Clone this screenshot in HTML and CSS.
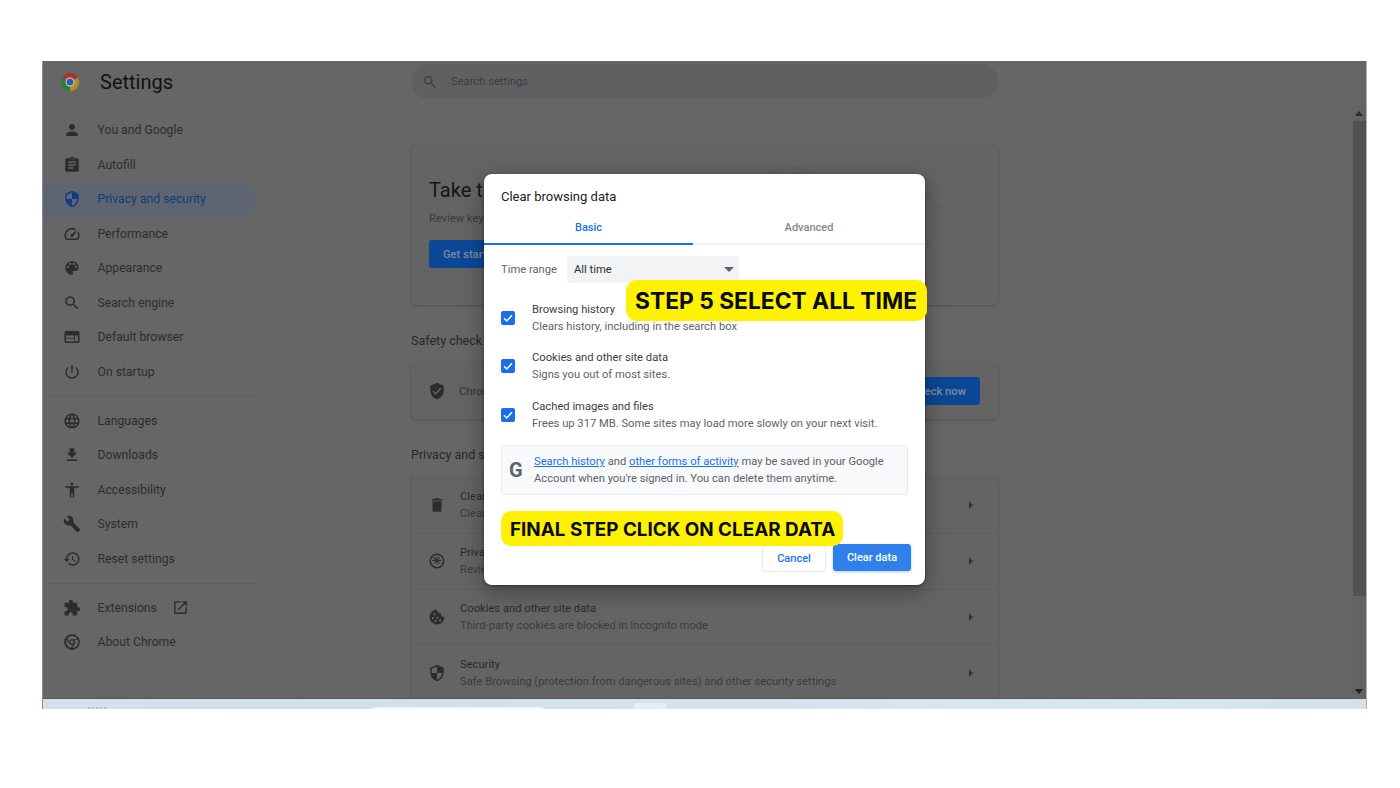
FILE: index.html
```html
<!DOCTYPE html>
<html lang="en">
<head>
<meta charset="utf-8">
<title>Clear browsing data</title>
<link rel="stylesheet" href="styles.css">
</head>
<body>
<div class="screen">
  <div class="app">
    <aside class="sidebar">
      <header class="brand">
        <svg class="logo" viewBox="0 0 24 24"><path fill="#a8342c" d="M12 12L2.470 6.500A11 11 0 0 1 21.530 6.500z"/><path fill="#35793c" d="M12 12L12 23A11 11 0 0 1 2.470 6.500z"/><path fill="#ad8f26" d="M12 12L21.530 6.500A11 11 0 0 1 12 23z"/><circle cx="12" cy="12" r="5.400" fill="#d4d4d4"/><circle cx="12" cy="12" r="4.200" fill="#2a5cab"/></svg>
        <h1 class="brand-title">Settings</h1>
      </header>
      <nav class="nav">
        <a class="nav-row"><svg class="ico" viewBox="0 0 24 24"><path d="M12 12c2.210 0 4-1.790 4-4s-1.790-4-4-4-4 1.790-4 4 1.790 4 4 4zm0 2c-2.670 0-8 1.340-8 4v2h16v-2c0-2.660-5.330-4-8-4z"/></svg>You and Google</a>
        <a class="nav-row"><svg class="ico" viewBox="0 0 24 24"><path d="M19 3h-4.180C14.400 1.840 13.300 1 12 1c-1.300 0-2.400.840-2.820 2H5c-1.100 0-2 .900-2 2v14c0 1.100.900 2 2 2h14c1.100 0 2-.900 2-2V5c0-1.100-.900-2-2-2zm-7 0c.550 0 1 .450 1 1s-.450 1-1 1-1-.450-1-1 .450-1 1-1zm2 14H7v-2h7v2zm3-4H7v-2h10v2zm0-4H7V7h10v2z"/></svg>Autofill</a>
        <a class="nav-row nav-active"><svg class="ico" viewBox="0 0 24 24"><path d="M12 1L3 5v6c0 5.550 3.840 10.740 9 12 5.160-1.260 9-6.450 9-12V5l-9-4zm0 10.990h7c-.530 4.120-3.280 7.790-7 8.940V12H5V6.300l7-3.110v8.800z"/></svg>Privacy and security</a>
        <a class="nav-row"><svg class="ico" viewBox="0 0 24 24"><path d="M20.380 8.570l-1.230 1.850a8 8 0 0 1-.220 7.580H5.070A8 8 0 0 1 15.580 6.850l1.850-1.230A10 10 0 0 0 3.350 19a2 2 0 0 0 1.720 1h13.850a2 2 0 0 0 1.740-1 10 10 0 0 0-.270-10.440zm-9.790 6.840a2 2 0 0 0 2.830 0l5.660-8.490-8.490 5.660a2 2 0 0 0 0 2.830z"/></svg>Performance</a>
        <a class="nav-row"><svg class="ico" viewBox="0 0 24 24"><path d="M12 3c-4.970 0-9 4.030-9 9s4.030 9 9 9c.830 0 1.500-.670 1.500-1.500 0-.390-.150-.740-.390-1.010-.230-.260-.380-.610-.380-.990 0-.830.670-1.500 1.500-1.500H16c2.760 0 5-2.240 5-5 0-4.420-4.030-8-9-8zm-5.500 9c-.830 0-1.500-.670-1.500-1.500S5.670 9 6.500 9 8 9.670 8 10.500 7.330 12 6.500 12zm3-4C8.670 8 8 7.330 8 6.500S8.670 5 9.500 5s1.500.670 1.500 1.500S10.330 8 9.500 8zm5 0c-.830 0-1.500-.670-1.500-1.500S13.670 5 14.500 5s1.500.670 1.500 1.500S15.330 8 14.500 8zm3 4c-.830 0-1.500-.670-1.500-1.500S16.670 9 17.500 9s1.500.670 1.500 1.500-.670 1.500-1.500 1.500z"/></svg>Appearance</a>
        <a class="nav-row"><svg class="ico" viewBox="0 0 24 24"><path d="M15.500 14h-.790l-.280-.270C15.410 12.590 16 11.110 16 9.500 16 5.910 13.090 3 9.500 3S3 5.910 3 9.500 5.910 16 9.500 16c1.610 0 3.090-.590 4.230-1.570l.270.280v.790l5 4.990L20.490 19l-4.990-5zm-6 0C7.010 14 5 11.990 5 9.500S7.010 5 9.500 5 14 7.010 14 9.500 11.990 14 9.500 14z"/></svg>Search engine</a>
        <a class="nav-row"><svg class="ico" viewBox="0 0 24 24"><path d="M20 4H4c-1.100 0-2 .900-2 2v12c0 1.100.900 2 2 2h16c1.100 0 2-.900 2-2V6c0-1.100-.900-2-2-2zM4 18v-4h11v4H4zm11-5H4v-3h11v3zm5 5h-4v-8h4v8z"/></svg>Default browser</a>
        <a class="nav-row"><svg class="ico" viewBox="0 0 24 24"><path d="M13 3h-2v10h2V3zm4.830 2.170l-1.420 1.420C17.990 7.860 19 9.810 19 12c0 3.870-3.130 7-7 7s-7-3.130-7-7c0-2.190 1.010-4.140 2.580-5.420L6.170 5.170C4.230 6.820 3 9.260 3 12c0 4.970 4.030 9 9 9s9-4.030 9-9c0-2.740-1.230-5.180-3.170-6.830z"/></svg>On startup</a>
        <hr class="nav-rule">
        <a class="nav-row"><svg class="ico" viewBox="0 0 24 24"><path d="M11.990 2C6.470 2 2 6.480 2 12s4.470 10 9.990 10C17.520 22 22 17.520 22 12S17.520 2 11.990 2zm6.930 6h-2.950c-.320-1.250-.780-2.450-1.380-3.560 1.840.630 3.370 1.910 4.330 3.560zM12 4.040c.830 1.200 1.480 2.530 1.910 3.960h-3.820c.430-1.430 1.080-2.760 1.910-3.960zM4.260 14C4.100 13.360 4 12.690 4 12s.100-1.360.260-2h3.380c-.080.660-.140 1.320-.140 2 0 .680.060 1.340.140 2H4.260zm.820 2h2.950c.320 1.250.780 2.450 1.380 3.560-1.840-.630-3.370-1.900-4.330-3.560zm2.950-8H5.080c.960-1.660 2.490-2.930 4.330-3.560C8.810 5.550 8.350 6.750 8.030 8zM12 19.960c-.830-1.200-1.480-2.530-1.910-3.960h3.820c-.430 1.430-1.080 2.760-1.910 3.960zM14.340 14H9.660c-.090-.660-.160-1.320-.160-2 0-.680.070-1.350.160-2h4.680c.090.650.160 1.320.160 2 0 .680-.070 1.340-.160 2zm.250 5.560c.600-1.110 1.060-2.310 1.380-3.560h2.950c-.960 1.650-2.490 2.930-4.330 3.560zM16.360 14c.080-.660.140-1.320.140-2 0-.680-.060-1.340-.140-2h3.380c.160.640.260 1.310.260 2s-.100 1.360-.260 2h-3.380z"/></svg>Languages</a>
        <a class="nav-row"><svg class="ico" viewBox="0 0 24 24"><path d="M19 9h-4V3H9v6H5l7 7 7-7zM5 18v2h14v-2H5z"/></svg>Downloads</a>
        <a class="nav-row"><svg class="ico" viewBox="0 0 24 24"><path d="M12 2c1.100 0 2 .900 2 2s-.900 2-2 2-2-.900-2-2 .900-2 2-2zm9 7h-6v13h-2v-6h-2v6H9V9H3V7h18v2z"/></svg>Accessibility</a>
        <a class="nav-row"><svg class="ico" viewBox="0 0 24 24"><path d="M22.700 19l-9.100-9.100c.900-2.300.400-5-1.500-6.900-2-2-5-2.400-7.400-1.300L9 6 6 9 1.600 4.700C.400 7.100.900 10.100 2.900 12.100c1.900 1.900 4.600 2.400 6.900 1.500l9.100 9.100c.400.400 1 .400 1.400 0l2.300-2.300c.500-.400.500-1.100.100-1.400z"/></svg>System</a>
        <a class="nav-row"><svg class="ico" viewBox="0 0 24 24"><path d="M13 3c-4.970 0-9 4.030-9 9H1l3.890 3.890.070.140L9 12H6c0-3.870 3.130-7 7-7s7 3.130 7 7-3.130 7-7 7c-1.930 0-3.680-.790-4.940-2.060l-1.420 1.420C8.270 19.990 10.510 21 13 21c4.970 0 9-4.030 9-9s-4.030-9-9-9zm-1 5v5l4.280 2.540.720-1.210-3.500-2.080V8H12z"/></svg>Reset settings</a>
        <hr class="nav-rule nav-rule-low">
        <a class="nav-row"><svg class="ico" viewBox="0 0 24 24"><path d="M20.500 11H19V7c0-1.100-.900-2-2-2h-4V3.500C13 2.120 11.880 1 10.500 1S8 2.120 8 3.500V5H4c-1.100 0-1.990.900-1.990 2v3.800H3.500c1.490 0 2.700 1.210 2.700 2.700s-1.210 2.700-2.700 2.700H2V20c0 1.100.900 2 2 2h3.800v-1.500c0-1.490 1.210-2.700 2.700-2.700 1.490 0 2.700 1.210 2.700 2.700V22H17c1.100 0 2-.900 2-2v-4h1.500c1.380 0 2.500-1.120 2.500-2.500S21.880 11 20.500 11z"/></svg>Extensions<svg class="ico ico-ext" viewBox="0 0 24 24"><path d="M19 19H5V5h7V3H5c-1.110 0-2 .900-2 2v14c0 1.100.890 2 2 2h14c1.100 0 2-.900 2-2v-7h-2v7zM14 3v2h3.590l-9.830 9.830 1.410 1.410L19 6.410V10h2V3h-7z"/></svg></a>
        <a class="nav-row"><svg class="ico" viewBox="0 0 24 24"><path fill-rule="evenodd" d="M12 1.500a10.500 10.500 0 1 1 0 21 10.500 10.500 0 0 1 0-21zm0 2.500a8 8 0 0 0-6.300 3.100l2.700 4.200a3.700 3.700 0 0 1 3.600-3h7.200A8 8 0 0 0 12 4zm0 5.800a2.200 2.200 0 1 0 0 4.400 2.200 2.200 0 0 0 0-4.400zM4.800 9A8 8 0 0 0 10.500 19.900l2.400-4.100a3.800 3.800 0 0 1-4.700-1.900L4.800 9zm15 .4h-4.300a3.800 3.800 0 0 1 .4 4.800L12.400 20A8 8 0 0 0 19.800 9.400z"/></svg>About Chrome</a>
      </nav>
    </aside>
    <main class="content">
      <div class="search"><svg class="ico ico-search" viewBox="0 0 24 24"><path d="M15.500 14h-.790l-.280-.270C15.410 12.590 16 11.110 16 9.500 16 5.910 13.090 3 9.500 3S3 5.910 3 9.500 5.910 16 9.500 16c1.610 0 3.090-.590 4.230-1.570l.270.280v.790l5 4.990L20.490 19l-4.990-5zm-6 0C7.010 14 5 11.990 5 9.500S7.010 5 9.500 5 14 7.010 14 9.500 11.990 14 9.500 14z"/></svg><span>Search settings</span></div>
      <section class="card guide">
        <h2 class="guide-title">Take the Privacy Guide</h2>
        <p class="guide-sub">Review key privacy and security controls</p>
        <span class="btn-dim">Get started</span>
        <svg class="cloud" viewBox="0 0 220 82"><circle cx="45" cy="40" r="38"/><path d="M0 80H199a19 19 0 0 0 0-38c-3 0-5 .500-7 1.500-3-7-7-12-12-14"/></svg>
      </section>
      <h3 class="section-label">Safety check</h3>
      <section class="card safety">
        <svg class="ico" viewBox="0 0 24 24"><path d="M12 1L3 5v6c0 5.550 3.840 10.740 9 12 5.160-1.260 9-6.450 9-12V5l-9-4zm-2 16l-4-4 1.410-1.410L10 14.170l6.590-6.590L18 9l-8 8z"/></svg>
        <span class="safety-text">Chrome can help keep you safe</span>
        <span class="btn-dim btn-check">Check now</span>
      </section>
      <h3 class="section-label">Privacy and security</h3>
      <section class="card list">
        <div class="list-row"><svg class="ico" viewBox="0 0 24 24"><path d="M6 19c0 1.100.900 2 2 2h8c1.100 0 2-.900 2-2V7H6v12zM19 4h-3.500l-1-1h-5l-1 1H5v2h14V4z"/></svg><div class="list-copy"><div class="list-title">Clear browsing data</div><div class="list-sub">Clear history, cookies, cache, and more</div></div><span class="caret"></span></div>
        <div class="list-row"><svg class="ico" viewBox="0 0 24 24"><path fill-rule="evenodd" d="M12 2a10 10 0 1 1 0 20 10 10 0 0 1 0-20zm0 2a8 8 0 1 0 0 16 8 8 0 0 0 0-16zm-.600 1.500h1.200v4.400l3.100-3.100.800.800-3.100 3.100h4.400v1.200h-4.400l3.100 3.100-.800.800-3.100-3.100v4.400h-1.200v-4.400l-3.100 3.100-.800-.800 3.100-3.100H5.500v-1.200h4.400L6.800 7.600l.800-.800 3.800 3.100z"/></svg><div class="list-copy"><div class="list-title">Privacy Guide</div><div class="list-sub">Review key privacy and security controls</div></div><span class="caret"></span></div>
        <div class="list-row"><svg class="ico" viewBox="0 0 24 24"><path fill-rule="evenodd" d="M12 2a10 10 0 1 0 10 10 5 5 0 0 1-5-5 5 5 0 0 1-5-5zM8.500 7a1.500 1.500 0 1 1 0 3 1.500 1.500 0 0 1 0-3zm-2 5a1.500 1.500 0 1 1 0 3 1.500 1.500 0 0 1 0-3zm6-.5a1.500 1.500 0 1 1 0 3 1.500 1.500 0 0 1 0-3zM10 16a1.500 1.500 0 1 1 0 3 1.500 1.500 0 0 1 0-3zm6-1a1.500 1.500 0 1 1 0 3 1.500 1.500 0 0 1 0-3z"/></svg><div class="list-copy"><div class="list-title">Cookies and other site data</div><div class="list-sub">Third-party cookies are blocked in Incognito mode</div></div><span class="caret"></span></div>
        <div class="list-row"><svg class="ico" viewBox="0 0 24 24"><path d="M12 1L3 5v6c0 5.550 3.840 10.740 9 12 5.160-1.260 9-6.450 9-12V5l-9-4zm0 10.990h7c-.530 4.120-3.280 7.790-7 8.940V12H5V6.300l7-3.110v8.800z"/></svg><div class="list-copy"><div class="list-title">Security</div><div class="list-sub">Safe Browsing (protection from dangerous sites) and other security settings</div></div><span class="caret"></span></div>
      </section>
    </main>
    <div class="scrollbar">
      <span class="arrow arrow-up"></span>
      <span class="thumb"></span>
      <span class="arrow arrow-down"></span>
    </div>
  </div>
  <div class="taskbar"><span class="task-dots"></span><span class="task-pill"></span><span class="task-btn"></span></div>

  <div class="dialog">
    <div class="dialog-title">Clear browsing data</div>
    <div class="tabs">
      <span class="tab tab-on">Basic</span>
      <span class="tab">Advanced</span>
    </div>
    <div class="range">
      <span class="range-label">Time range</span>
      <span class="select">All time<span class="select-caret"></span></span>
    </div>
    <div class="opt">
      <span class="check"><svg viewBox="0 0 14 14"><path d="M3 7.300l2.800 2.700L11 4.300"/></svg></span>
      <div><div class="opt-title">Browsing history</div><div class="opt-sub">Clears history, including in the search box</div></div>
    </div>
    <div class="opt">
      <span class="check"><svg viewBox="0 0 14 14"><path d="M3 7.300l2.800 2.700L11 4.300"/></svg></span>
      <div><div class="opt-title">Cookies and other site data</div><div class="opt-sub">Signs you out of most sites.</div></div>
    </div>
    <div class="opt">
      <span class="check"><svg viewBox="0 0 14 14"><path d="M3 7.300l2.800 2.700L11 4.300"/></svg></span>
      <div><div class="opt-title">Cached images and files</div><div class="opt-sub">Frees up 317 MB. Some sites may load more slowly on your next visit.</div></div>
    </div>
    <div class="notice">
      <span class="g-mark">G</span>
      <p class="notice-text"><a class="link">Search history</a> and <a class="link">other forms of activity</a> may be saved in your Google Account when you're signed in. You can delete them anytime.</p>
    </div>
    <div class="actions">
      <button class="btn btn-cancel">Cancel</button>
      <button class="btn btn-clear">Clear data</button>
    </div>
  </div>

  <div class="tag tag-step">STEP 5 SELECT ALL TIME</div>
  <div class="tag tag-final">FINAL STEP CLICK ON CLEAR DATA</div>
</div>
</body>
</html>
```
FILE: styles.css
```css
* { box-sizing: border-box; }
html, body { margin: 0; height: 100%; background: #fff; overflow: hidden; }
body { padding: 61px 33px 79px 42px; font-family: Roboto, "Liberation Sans", sans-serif; }

.screen { position: relative; height: 648px; display: flex; flex-direction: column; overflow: hidden; border-left: 1px solid #8c8c8c; border-right: 1px solid #b0b0b0; }
.app { height: 638px; flex: none; display: flex; background: #666; border-bottom: 1px solid #565656; overflow: hidden; }

.sidebar { width: 368px; flex: none; }
.brand { height: 52px; display: flex; align-items: center; padding-left: 17px; }
.logo { width: 20px; height: 20px; margin-top: -10px; }
.brand-title { margin: -10px 0 0 20px; font-size: 20px; font-weight: 400; color: #111214; }
.nav { display: flex; flex-direction: column; }
.nav-row { height: 34.500px; flex: none; display: flex; align-items: center; padding-left: 19.500px; width: 213px; font-size: 12.200px; color: #2c2d30; border-radius: 0 17px 17px 0; }
.nav-active { background: #5f6570; color: #143a7c; }
.nav-active .ico { fill: #123c86; }
.nav-rule { height: 1px; flex: none; margin: 6.750px 0; width: 216px; border: 0; background: #5f5f5f; }
.nav-rule-low { margin: 7px 0 6.500px; }
.ico { width: 18px; height: 18px; flex: none; fill: #2b2c2f; margin-right: 17px; }
.ico-ext { width: 17px; height: 17px; margin: 0 0 0 15px; }

.content { width: 587px; flex: none; display: flex; flex-direction: column; }
.content > * { flex: none; }
.search { height: 35px; margin-top: 3px; display: flex; align-items: center; padding-left: 11px; border-radius: 18px; background: #5f6062; font-size: 11.200px; color: #3c3d40; }
.search .ico-search { width: 16px; height: 16px; margin-right: 13px; fill: #3b3c3f; }
.card { background: #646464; border-radius: 5px; box-shadow: 0 1px 3px #525252, 0 0 1px #555; }
.guide { height: 160px; margin-top: 46px; position: relative; padding: 33px 18px; overflow: hidden; }
.guide-title { margin: 0; font-size: 20px; font-weight: 400; color: #141517; }
.guide-sub { margin: 10px 0 15px; font-size: 11.200px; color: #3a3b3d; }
.btn-dim { display: inline-flex; align-items: center; height: 28px; padding: 0 14px; border-radius: 3px; background: #0c4796; color: #7c8aa0; font-size: 11.200px; font-weight: 500; }
.cloud { position: absolute; right: 33px; top: 20px; width: 220px; height: 82px; fill: none; stroke: #58616e; stroke-width: 1; }
.section-label { margin: 28px 0 0; height: 16px; line-height: 16px; font-size: 12.500px; font-weight: 400; color: #27282a; }
.safety { height: 56px; margin-top: 14px; display: flex; align-items: center; padding-left: 17px; }
.safety .ico { margin-right: 13px; }
.safety-text { font-size: 11.200px; color: #333; }
.btn-check { margin: 0 18px 0 auto; }
.list { margin-top: 14px; height: 240px; padding-top: 1px; border-radius: 5px 5px 0 0; }
.list-row { height: 55.800px; display: flex; align-items: center; padding: 0 25px 0 17px; border-bottom: 1px solid #5d5d5d; }
.list-row:last-child { border-bottom: 0; }
.list-row .ico { margin-right: 14px; }
.list-copy { flex: 1; }
.list-title { font-size: 11.200px; line-height: 17px; color: #2a2b2d; }
.list-sub { font-size: 11.200px; line-height: 17px; color: #3b3c3f; }
.caret { width: 0; height: 0; border-left: 4px solid #2f3032; border-top: 4px solid transparent; border-bottom: 4px solid transparent; }

.scrollbar { position: absolute; right: 0; top: 45px; bottom: 10px; width: 14px; display: flex; flex-direction: column; align-items: center; background: #636363; }
.thumb { width: 13px; height: 475px; margin-top: 5px; background: #525252; }
.arrow { width: 0; height: 0; border-left: 4px solid transparent; border-right: 4px solid transparent; }
.arrow-up { border-bottom: 5px solid #2b2b2b; margin-top: 5px; }
.arrow-down { border-top: 5px solid #1e1e1e; margin-top: auto; margin-bottom: 5px; }

.taskbar { height: 10px; flex: none; position: relative; background: linear-gradient(90deg, #d4dfeb, #d0e0e8 30%, #d9e2ee 60%, #d3e9ec 85%, #d6e0ec); }
.task-dots { position: absolute; left: 45px; top: 8px; width: 18px; height: 2px; border-top: 2px dotted #b4c0cc; }
.task-pill { position: absolute; left: 327px; top: 8px; width: 176px; height: 8px; border-radius: 6px 6px 0 0; background: #f2f6f9; }
.task-btn { position: absolute; left: 591px; top: 4px; width: 33px; height: 10px; border-radius: 3px 3px 0 0; background: #e6eef3; }

.dialog { position: absolute; left: 441px; top: 113px; width: 441px; height: 411px; background: #fff; border-radius: 8px; box-shadow: 0 6px 22px rgba(0, 0, 0, .35), 0 1px 3px rgba(0, 0, 0, .4); font-size: 11.200px; color: #5f6368; }
.dialog-title { height: 39px; padding: 14px 17px 0; font-size: 13px; line-height: 18px; color: #202124; }
.tabs { display: flex; height: 32px; border-bottom: 2px solid #f0f1f3; }
.tab { flex: 1; height: 32px; display: flex; align-items: center; justify-content: center; padding-bottom: 3px; font-size: 11px; font-weight: 500; color: #80868b; }
.tab-on { flex: none; width: 209px; padding-bottom: 1px; color: #1a73e8; border-bottom: 2px solid #1a73e8; }
.range { display: flex; align-items: center; height: 27px; margin-top: 11px; padding-left: 17px; }
.range-label { width: 66px; color: #5f6368; }
.select { width: 172px; height: 27px; display: flex; align-items: center; justify-content: space-between; padding: 0 5px 0 7px; border-radius: 3px; background: #f1f3f4; color: #2b2c2f; }
.select-caret { width: 0; height: 0; border-left: 5px solid transparent; border-right: 5px solid transparent; border-top: 5px solid #5f6368; }
.opt { display: flex; align-items: center; height: 48.300px; padding-left: 17px; }
.range + .opt { margin-top: 11px; }
.check { width: 14px; height: 14px; flex: none; margin-right: 17px; border-radius: 2px; background: #1a6fe8; display: flex; }
.check svg { width: 14px; height: 14px; fill: none; stroke: #fff; stroke-width: 1.500; }
.opt-title { font-size: 11.200px; line-height: 17px; color: #3c4043; }
.opt-sub { font-size: 11.200px; line-height: 17px; color: #5f6368; }
.notice { display: flex; align-items: center; width: 407px; height: 50px; margin: 6.500px 0 0 17px; border: 1px solid #e8eaed; border-radius: 3px; background: #f8f9fa; padding-left: 7px; }
.g-mark { width: 25px; flex: none; font-size: 20px; font-weight: 700; color: #5f6368; line-height: 1; }
.notice-text { margin: 0; line-height: 17px; font-size: 11.200px; color: #5f6368; }
.link { color: #1a73e8; text-decoration: underline; }
.actions { display: flex; justify-content: flex-end; align-items: flex-start; gap: 7px; padding: 49px 14px 0 0; }
.btn { height: 27px; border-radius: 3px; border: 1px solid #e8eaed; font: 500 11px Roboto, "Liberation Sans", sans-serif; }
.btn-cancel { width: 64px; margin-top: 1px; background: #fff; color: #1a73e8; }
.btn-clear { width: 78px; border-color: #2f80ea; background: #2f80ea; color: #fff; box-shadow: 0 1px 3px rgba(47, 128, 234, .4); }

.tag { position: absolute; display: flex; align-items: center; background: #fff200; color: #0a0a0a; font-family: Inter, "Liberation Sans", sans-serif; font-weight: 700; white-space: nowrap; }
.tag-step { left: 583px; top: 219px; width: 301px; height: 41px; padding-left: 9px; border-radius: 11px; font-size: 22.800px; }
.tag-final { left: 458px; top: 450px; width: 342px; height: 35px; padding: 1px 0 0 9px; border-radius: 10px; font-size: 18.850px; }
```
